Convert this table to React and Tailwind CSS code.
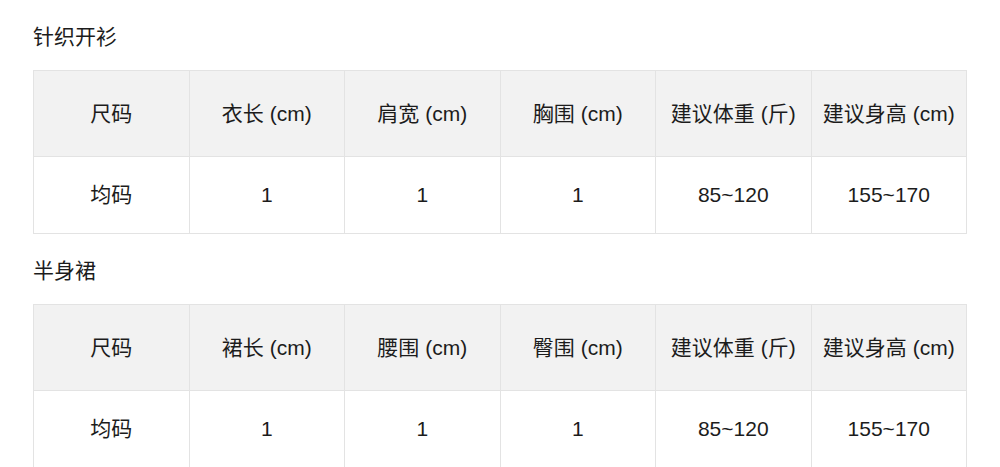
import React from "react";

const tables = [
    {
        title: "针织开衫",
        head: ["尺码", "衣长 (cm)", "肩宽 (cm)", "胸围 (cm)", "建议体重 (斤)", "建议身高 (cm)"],
        rows: [["均码", "1", "1", "1", "85~120", "155~170"]],
    },
    {
        title: "半身裙",
        head: ["尺码", "裙长 (cm)", "腰围 (cm)", "臀围 (cm)", "建议体重 (斤)", "建议身高 (cm)"],
        rows: [["均码", "1", "1", "1", "85~120", "155~170"]],
    },
];

const SizeTable = ({ title, head, rows }) => {
    return (
        <div>
            <div className="h-[70px] pt-[22px]">
                <p className="text-[21px] leading-[30px] text-[#1c1c1c]">{title}</p>
            </div>
            <table className="w-full table-fixed border-collapse text-[21px] text-[#1c1c1c]">
                <thead>
                    <tr className="h-[86px] bg-[#f2f2f2]">
                        {head.map((h) => (
                            <th key={h} className="border border-[#e3e3e3] font-normal text-center px-0 whitespace-nowrap">
                                {h}
                            </th>
                        ))}
                    </tr>
                </thead>
                <tbody>
                    {rows.map((row, i) => (
                        <tr key={i} className="h-[77px] bg-white">
                            {row.map((c, j) => (
                                <td key={j} className="border border-[#e3e3e3] text-center">
                                    {c}
                                </td>
                            ))}
                        </tr>
                    ))}
                </tbody>
            </table>
        </div>
    );
};

export default function App() {
    return (
        <div
            className="w-[1000px] h-[467px] bg-white px-[33px] overflow-hidden"
            style={{ fontFamily: '"Liberation Sans", "Noto Sans CJK SC", sans-serif' }}
        >
            {tables.map((t) => (
                <SizeTable key={t.title} {...t} />
            ))}
        </div>
    );
}
